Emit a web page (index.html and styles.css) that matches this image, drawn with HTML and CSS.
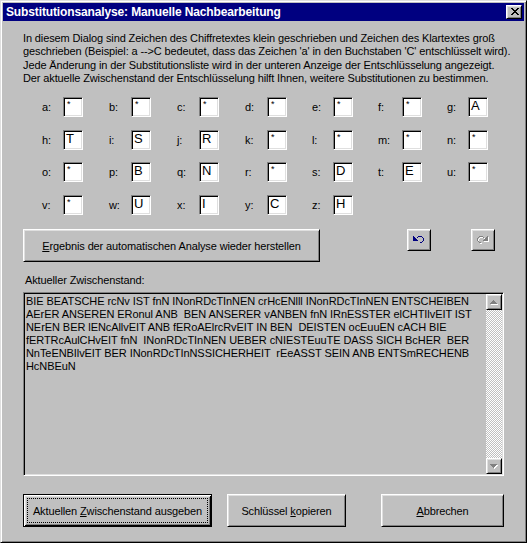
FILE: index.html
```html
<!DOCTYPE html>
<html lang="de">
<head>
<meta charset="utf-8">
<title>Substitutionsanalyse: Manuelle Nachbearbeitung</title>
<link rel="stylesheet" href="styles.css">
</head>
<body>
<div class="dialog">
  <div class="titlebar">
    <span class="title">Substitutionsanalyse: Manuelle Nachbearbeitung</span>
    <button class="close bevel" aria-label="Schließen">
      <svg width="8" height="7" viewBox="0 0 8 7" shape-rendering="crispEdges"><path fill="#000" d="M0 0h2v1h-2z M6 0h2v1h-2z M1 1h2v1h-2z M5 1h2v1h-2z M2 2h4v1h-4z M3 3h2v1h-2z M2 4h4v1h-4z M1 5h2v1h-2z M5 5h2v1h-2z M0 6h2v1h-2z M6 6h2v1h-2z"/></svg>
    </button>
  </div>
  <div class="content">
    <p class="intro">In diesem Dialog sind Zeichen des Chiffretextes klein geschrieben und Zeichen des Klartextes groß<br>geschrieben (Beispiel: a --&gt;C bedeutet, dass das Zeichen 'a' in den Buchstaben 'C' entschlüsselt wird).<br>Jede Änderung in der Substitutionsliste wird in der unteren Anzeige der Entschlüsselung angezeigt.<br>Der aktuelle Zwischenstand der Entschlüsselung hilft Ihnen, weitere Substitutionen zu bestimmen.</p>

    <div class="keys">
      <span class="lbl">a:</span><span class="box empty">*</span>
      <span class="lbl">b:</span><span class="box empty">*</span>
      <span class="lbl">c:</span><span class="box empty">*</span>
      <span class="lbl">d:</span><span class="box empty">*</span>
      <span class="lbl">e:</span><span class="box empty">*</span>
      <span class="lbl">f:</span><span class="box empty">*</span>
      <span class="lbl">g:</span><span class="box">A</span>
      <span class="lbl">h:</span><span class="box">T</span>
      <span class="lbl">i:</span><span class="box">S</span>
      <span class="lbl">j:</span><span class="box">R</span>
      <span class="lbl">k:</span><span class="box empty">*</span>
      <span class="lbl">l:</span><span class="box empty">*</span>
      <span class="lbl">m:</span><span class="box empty">*</span>
      <span class="lbl">n:</span><span class="box empty">*</span>
      <span class="lbl">o:</span><span class="box empty">*</span>
      <span class="lbl">p:</span><span class="box">B</span>
      <span class="lbl">q:</span><span class="box">N</span>
      <span class="lbl">r:</span><span class="box empty">*</span>
      <span class="lbl">s:</span><span class="box">D</span>
      <span class="lbl">t:</span><span class="box">E</span>
      <span class="lbl">u:</span><span class="box empty">*</span>
      <span class="lbl">v:</span><span class="box empty">*</span>
      <span class="lbl">w:</span><span class="box">U</span>
      <span class="lbl">x:</span><span class="box">I</span>
      <span class="lbl">y:</span><span class="box">C</span>
      <span class="lbl">z:</span><span class="box">H</span>
    </div>

    <div class="tools">
      <button class="btn bevel restore"><u>E</u>rgebnis der automatischen Analyse wieder herstellen</button>
      <button class="btn bevel iconbtn undo" aria-label="Rückgängig">
        <svg width="12" height="8" viewBox="0 0 12 8" shape-rendering="crispEdges"><path fill="#000080" d="M0 0h1v1h-1z M5 0h4v1h-4z M0 1h2v1h-2z M4 1h1v1h-1z M9 1h1v1h-1z M0 2h3v1h-3z M10 2h1v3h-1z M0 3h4v1h-4z M0 4h5v1h-5z M9 5h1v1h-1z M7 6h2v1h-2z"/></svg>
      </button>
      <button class="btn bevel iconbtn redo" aria-label="Wiederherstellen">
        <svg width="12" height="8" viewBox="0 0 12 8" shape-rendering="crispEdges"><path fill="#fff" transform="translate(1 1)" d="M10 0h1v1h-1z M2 0h4v1h-4z M9 1h2v1h-2z M6 1h1v1h-1z M1 1h1v1h-1z M8 2h3v1h-3z M0 2h1v3h-1z M7 3h4v1h-4z M6 4h5v1h-5z M1 5h1v1h-1z M2 6h2v1h-2z"/><path fill="#808080" d="M10 0h1v1h-1z M2 0h4v1h-4z M9 1h2v1h-2z M6 1h1v1h-1z M1 1h1v1h-1z M8 2h3v1h-3z M0 2h1v3h-1z M7 3h4v1h-4z M6 4h5v1h-5z M1 5h1v1h-1z M2 6h2v1h-2z"/></svg>
      </button>
    </div>

    <div class="caption">Aktueller Zwischenstand:</div>

    <div class="memo">
      <div class="memo-text">BIE BEATSCHE rcNv IST fnN INonRDcTInNEN crHcENlll INonRDcTInNEN ENTSCHEIBEN
AErER ANSEREN ERonul ANB  BEN ANSERER vANBEN fnN IRnESSTER elCHTIlvEIT IST
NErEN BER lENcAllvEIT ANB fERoAElrcRvEIT IN BEN  DEISTEN ocEuuEN cACH BIE
fERTRcAulCHvEIT fnN  INonRDcTInNEN UEBER cNIESTEuuTE DASS SICH BcHER  BER
NnTeENBIlvEIT BER INonRDcTInNSSICHERHEIT  rEeASST SEIN ANB ENTSmRECHENB
HcNBEuN</div>
      <div class="vscroll">
        <div class="sbtn bevel">
          <svg width="8" height="5" viewBox="0 0 8 5" shape-rendering="crispEdges"><path fill="#fff" transform="translate(1 1)" d="M3 0h1v1h-1z M2 1h3v1h-3z M1 2h5v1h-5z M0 3h7v1h-7z"/><path fill="#808080" d="M3 0h1v1h-1z M2 1h3v1h-3z M1 2h5v1h-5z M0 3h7v1h-7z"/></svg>
        </div>
        <div class="track"></div>
        <div class="sbtn bevel">
          <svg width="8" height="5" viewBox="0 0 8 5" shape-rendering="crispEdges"><path fill="#fff" transform="translate(1 1)" d="M0 0h7v1h-7z M1 1h5v1h-5z M2 2h3v1h-3z M3 3h1v1h-1z"/><path fill="#808080" d="M0 0h7v1h-7z M1 1h5v1h-5z M2 2h3v1h-3z M3 3h1v1h-1z"/></svg>
        </div>
      </div>
    </div>

    <div class="footer">
      <button class="btn default output">Aktuellen <u>Z</u>wischenstand ausgeben</button>
      <button class="btn bevel copy">Schlüssel <u>k</u>opieren</button>
      <button class="btn bevel cancel"><u>A</u>bbrechen</button>
    </div>
  </div>
</div>
</body>
</html>
```
FILE: styles.css
```css
* {
  box-sizing: border-box;
}

html,
body {
  margin: 0;
  padding: 0;
  background: #c0c0c0;
}

body {
  font-family: "Liberation Sans", Arial, sans-serif;
  font-size: 11px;
  letter-spacing: -0.12px;
  color: #000;
}

.dialog {
  width: 527px;
  height: 543px;
  border: 1px solid;
  border-color: #dfdfdf #000 #000 #dfdfdf;
  box-shadow: inset 1px 1px #fff, inset -1px -1px #808080;
  padding: 2px;
  background: #c0c0c0;
  display: flex;
  flex-direction: column;
}

.bevel {
  border: 1px solid;
  border-color: #fff #000 #000 #fff;
  box-shadow: inset 1px 1px #dfdfdf, inset -1px -1px #808080;
  background: #c0c0c0;
}

/* title bar */
.titlebar {
  height: 18px;
  flex: none;
  background: #000080;
  color: #fff;
  display: flex;
  align-items: flex-start;
  padding: 0 2px 0 3px;
}

.title {
  flex: 1;
  font-weight: bold;
  font-size: 12px;
  letter-spacing: -0.13px;
  line-height: 18px;
  white-space: nowrap;
}

.close {
  margin-top: 2px;
  width: 16px;
  height: 14px;
  padding: 0 0 1px 1px;
  display: flex;
  align-items: center;
  justify-content: center;
}

.close svg {
  display: block;
}

/* content */
.content {
  flex: 1;
  display: flex;
  flex-direction: column;
  padding: 10.5px 20px 0 20px;
}

.intro {
  margin: 0;
  line-height: 13.5px;
  white-space: nowrap;
}

.keys {
  margin: 11.5px 0 0 19px;
  display: grid;
  grid-template-columns: 21px 46px 22px 46px 22px 46px 22px 45px 21px 45px 24px 45px 21px 20px;
  grid-template-rows: 33px 32px 33px 20px;
  align-items: start;
}

.lbl {
  height: 20px;
  line-height: 20px;
  white-space: nowrap;
}

.box {
  width: 20px;
  height: 20px;
  background: #fff;
  border: 1px solid;
  border-color: #808080 #fff #fff #808080;
  box-shadow: inset 1px 1px #000, inset -1px -1px #dfdfdf;
  padding: 0 0 0 2px;
  font-size: 13px;
  line-height: 15px;
  letter-spacing: 0;
  overflow: hidden;
}

.box.empty {
  font-size: 9px;
  line-height: 12px;
  padding-left: 3px;
}

/* buttons */
.btn {
  font: inherit;
  letter-spacing: inherit;
  color: #000;
  padding: 0;
  margin: 0;
  background: #c0c0c0;
  white-space: nowrap;
}

.btn u {
  text-decoration: underline;
  text-underline-offset: 1px;
}

.tools {
  margin-top: 14px;
  display: flex;
  align-items: flex-start;
  height: 33px;
}

.restore {
  width: 297px;
  height: 33px;
}

.iconbtn {
  width: 24px;
  height: 22px;
  display: flex;
  align-items: center;
  justify-content: center;
}

.iconbtn svg {
  display: block;
}

.undo {
  margin-left: 87px;
}

.redo {
  margin-left: 40px;
}

.caption {
  margin-top: 12px;
  padding-left: 2px;
  line-height: 13px;
}

/* memo */
.memo {
  margin-top: 5px;
  height: 184px;
  display: flex;
  border: 1px solid;
  border-color: #808080 #fff #fff #808080;
  box-shadow: inset 1px 1px #000, inset -1px -1px #dfdfdf;
  padding: 1px;
}

.memo-text {
  flex: 1;
  white-space: pre;
  line-height: 13px;
  letter-spacing: -0.07px;
  padding: 1px 0 0 1px;
  overflow: hidden;
}

.vscroll {
  width: 16px;
  display: flex;
  flex-direction: column;
}

.sbtn {
  width: 16px;
  height: 16px;
  flex: none;
  display: flex;
  align-items: center;
  justify-content: center;
}

.sbtn svg {
  display: block;
}

.track {
  flex: 1;
  background: repeating-conic-gradient(#c0c0c0 0 25%, #fff 0 50%) 0 0 / 2px 2px;
}

/* footer */
.footer {
  margin-top: 18px;
  display: flex;
  gap: 15px;
  height: 33px;
}

.footer .btn {
  height: 33px;
}

.default {
  border: 1px solid #000;
  box-shadow: inset 1px 1px #fff, inset -1px -1px #000, inset 2px 2px #dfdfdf, inset -2px -2px #808080;
  outline: 1px dotted #000;
  outline-offset: -5px;
}

.output {
  width: 189px;
}

.copy {
  width: 119px;
}

.cancel {
  width: 123px;
  margin-left: auto;
}
```
